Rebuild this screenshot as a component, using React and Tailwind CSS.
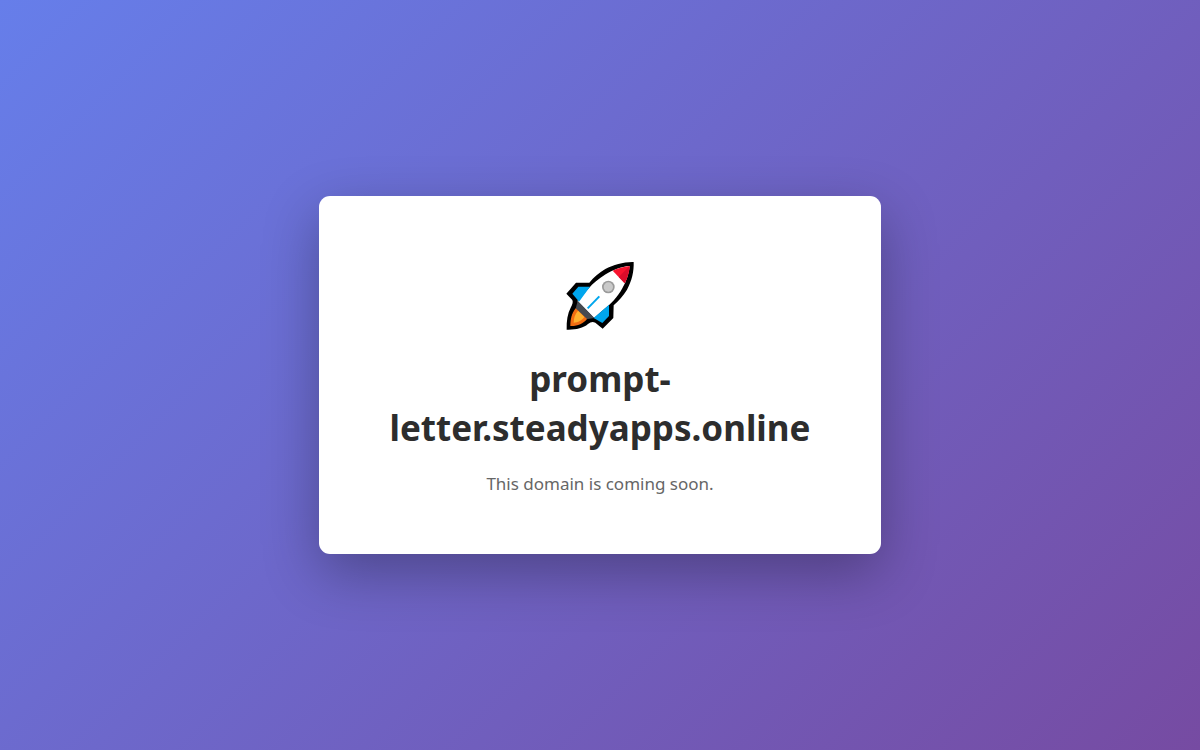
import React from 'react'

const Rocket = () => {
  return (
    <svg
      className="w-[72px] h-[72px]"
      viewBox="27 30 216 216"
      role="img"
      aria-label="Rocket"
    >
      <path
        d="M236 36 C208 35 176 44 151 57 C132 68 116 82 103 98 L63 98 L34 131 L52 150 C55 157 52 163 47 173 C38 190 34 212 35 239 C60 240 84 235 99 222 C107 215 114 214 121 218 L143 236 L175 204 L176 166 C192 151 205 137 216 119 C231 92 237 64 236 36 Z"
        fill="#000"
      />
      <path
        d="M224 48 C198 50 173 60 152 73 C130 87 114 100 100 116 L67 153 L117 204 L140 184 C167 163 188 141 202 115 C215 92 222 70 224 48 Z"
        fill="#fff"
      />
      <path d="M105 110 L70 110 L52 131 L68 150 L72 155 Z" fill="#00a6ed" />
      <path d="M162 164 L162 198 L142 219 L116 204 Z" fill="#00a6ed" />
      <path d="M224 48 C206 50 188 55 173 62 L209 100 C218 82 223 65 224 48 Z" fill="#f8142f" />
      <path d="M224 48 L191 81 L209 100 C218 82 223 65 224 48 Z" fill="#dc0c2a" />
      <circle cx="160" cy="111" r="19" fill="#9b9b9b" />
      <circle cx="160" cy="111" r="14" fill="#cacaca" />
      <path d="M133 139 L98 175" stroke="#00a6ed" strokeWidth="6" />
      <path d="M68 152 L62 176 L94 208 L118 204 Z" fill="#464a50" />
      <path
        d="M62 175 C50 190 46 208 46 228 C66 229 84 222 96 207 Z"
        fill="#f36d12"
      />
      <path
        d="M69 182 C60 192 56 204 56 218 C69 218 81 211 88 201 Z"
        fill="#ffb02e"
      />
    </svg>
  )
}

const App = () => {
  return (
    <main className="min-h-screen flex items-center justify-center p-5 bg-linear-[135deg,#667eea,#764ba2] font-['Noto_Sans','Open_Sans',sans-serif]">
      <div className="w-full max-w-[562px] flex flex-col items-center rounded-[11px] bg-white px-10 pt-16 pb-14 text-center shadow-[0_19px_56px_rgba(0,0,0,0.3)]">
        <Rocket />
        <h1 className="mt-[22px] text-[35px] leading-[49px] font-bold text-[#2d2d2d]">
          prompt-letter.steadyapps.online
        </h1>
        <p className="mt-[18px] text-[17px] leading-7 text-[#666]">
          This domain is coming soon.
        </p>
      </div>
    </main>
  )
}

export default App
